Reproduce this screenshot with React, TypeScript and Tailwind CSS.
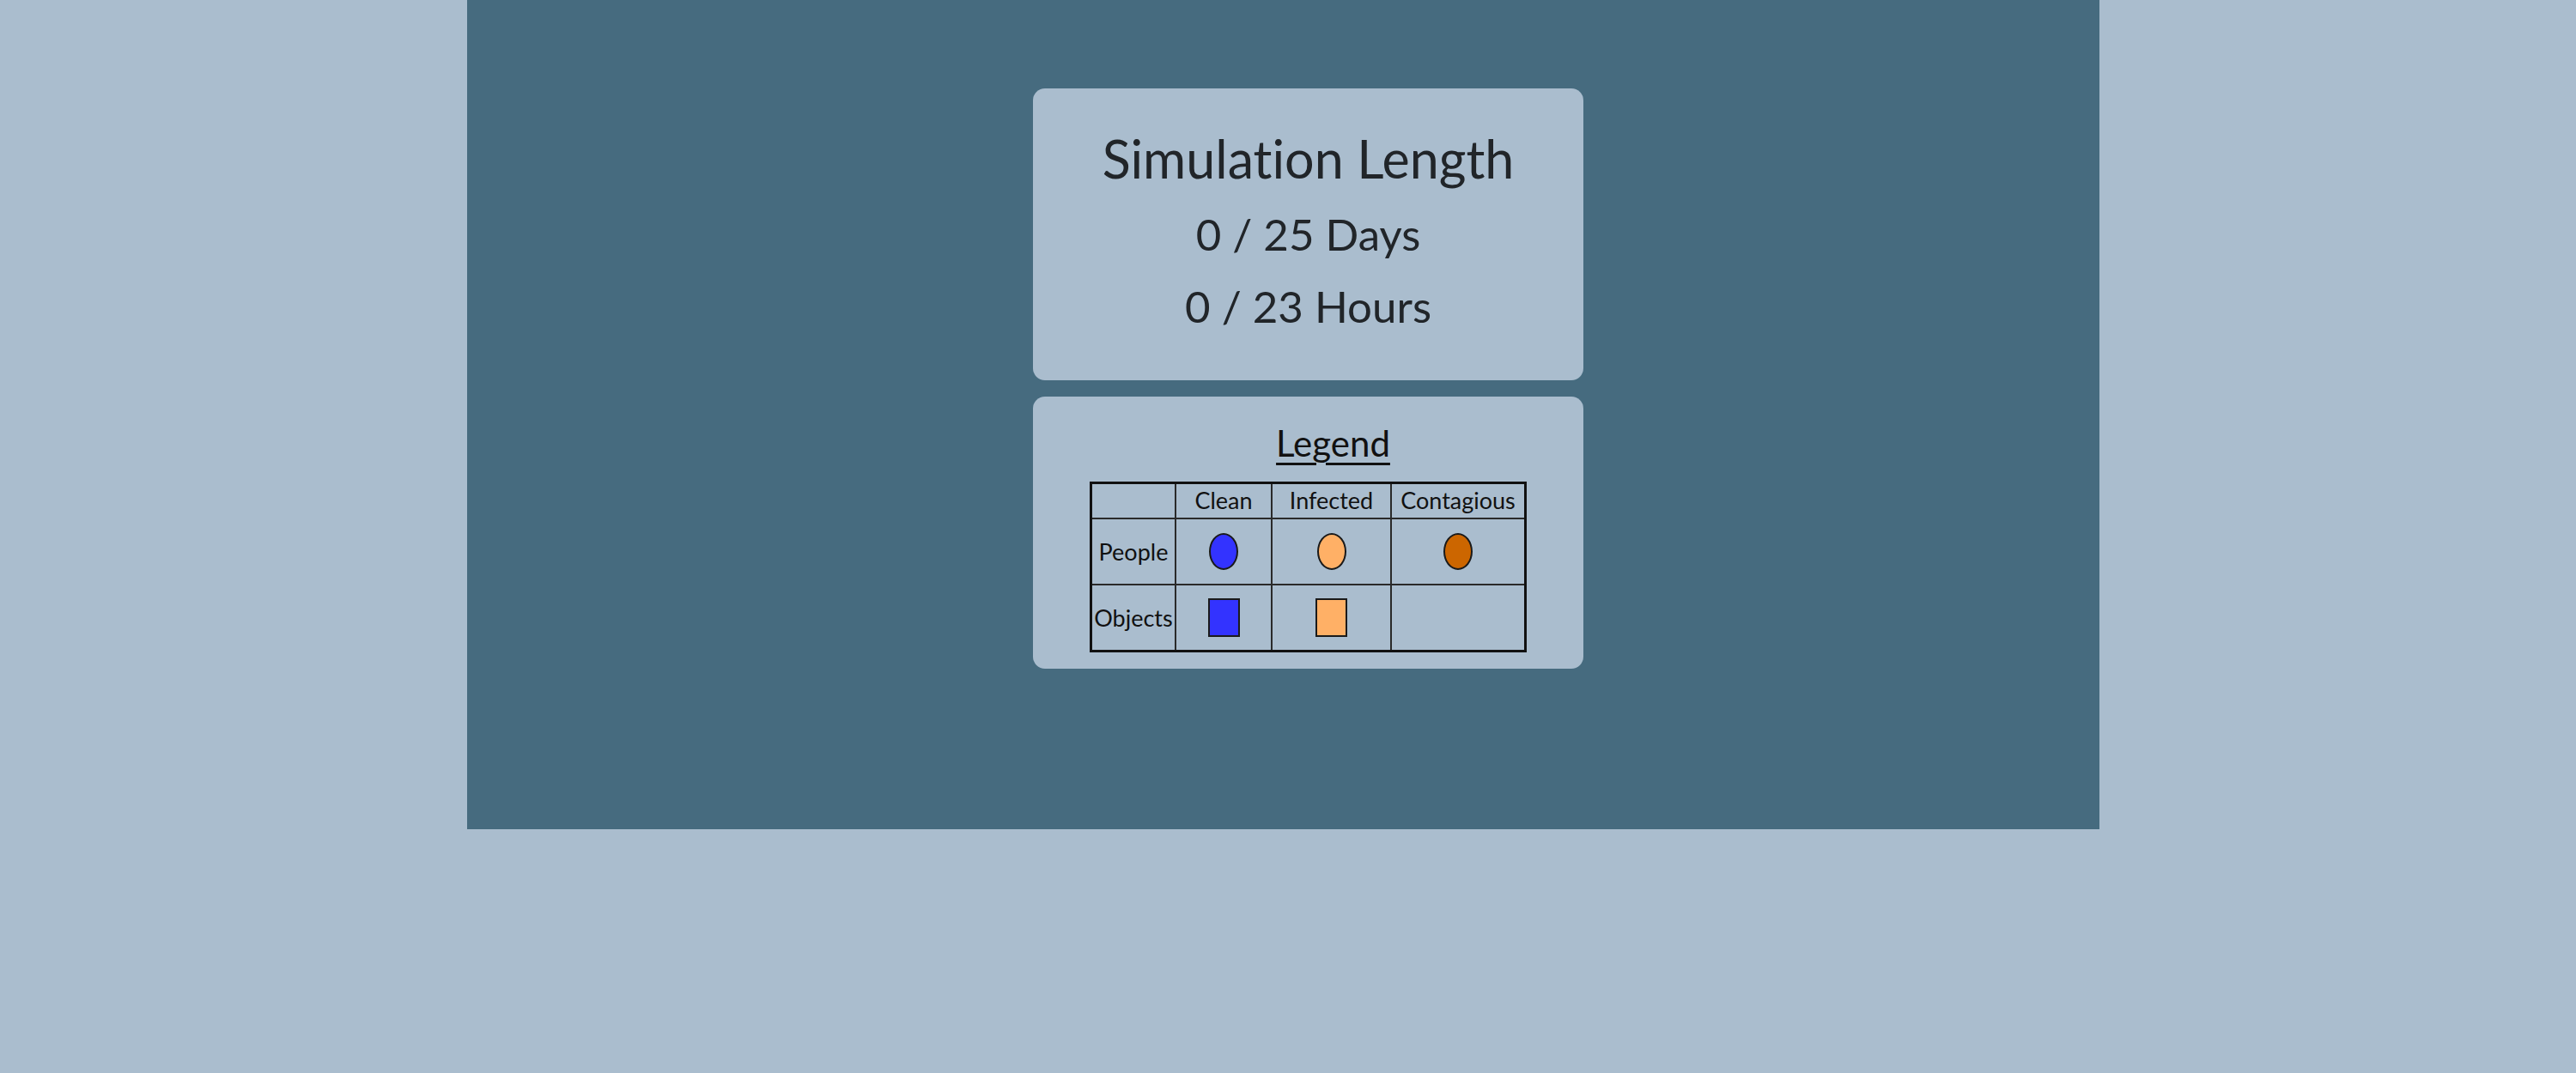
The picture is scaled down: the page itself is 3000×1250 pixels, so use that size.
import React from "react";

const font = { fontFamily: "Lato, 'Open Sans', sans-serif" };

function Cell({
  children,
  right = true,
  bottom = true,
}: {
  children?: React.ReactNode;
  right?: boolean;
  bottom?: boolean;
}) {
  return (
    <div
      className={
        "flex items-center justify-center border-[#2a2a2a] " +
        (right ? "border-r-2 " : "") +
        (bottom ? "border-b-2" : "")
      }
    >
      {children}
    </div>
  );
}

function Dot({ color }: { color: string }) {
  return (
    <div
      className="h-[43px] w-[34px] rounded-[50%] border-2 border-[#1a1a1a]"
      style={{ backgroundColor: color }}
    />
  );
}

function Box({ color }: { color: string }) {
  return (
    <div
      className="h-[45px] w-[37px] border-2 border-[#1a1a1a]"
      style={{ backgroundColor: color }}
    />
  );
}

export default function App() {
  return (
    <div className="min-h-[1250px] w-full bg-[#aabdce] [font-variant-ligatures:none]" style={font}>
      <div className="ml-[544px] flex h-[966px] w-[1901px] flex-col gap-[19px] bg-[#466b7f] pl-[659px] pt-[103px]">
        <div className="flex h-[340px] w-[641px] flex-col items-center rounded-[14px] bg-[#aabdce] pt-[40px] text-[#212529]">
          <div className="h-[88px] text-[61px] leading-[84px]">Simulation Length</div>
          <div className="h-[84px] text-[51px] leading-[84px]">0 / 25 Days</div>
          <div className="h-[84px] text-[51px] leading-[84px]">0 / 23 Hours</div>
        </div>
        <div className="flex h-[317px] w-[641px] flex-col items-center rounded-[14px] bg-[#aabdce] pt-[29px]">
          <div className="h-[50px] pl-[58px] text-[42px] leading-[50px] text-[#111] underline decoration-[3px] underline-offset-[7px]">
            Legend
          </div>
          <div className="mt-[20px] h-[199px] w-[509px] border-[3px] border-[#111] text-[27px] leading-none text-[#111]">
            <div className="grid h-full grid-cols-[98px_112px_139px_154px] grid-rows-[41px_77px_75px]">
              <Cell />
              <Cell>
                <span className="-mt-[3px]">Clean</span>
              </Cell>
              <Cell>
                <span className="-mt-[3px]">Infected</span>
              </Cell>
              <Cell right={false}>
                <span className="-mt-[3px]">Contagious</span>
              </Cell>
              <Cell>People</Cell>
              <Cell>
                <Dot color="#3333ff" />
              </Cell>
              <Cell>
                <Dot color="#ffb066" />
              </Cell>
              <Cell right={false}>
                <Dot color="#cc6600" />
              </Cell>
              <Cell bottom={false}>Objects</Cell>
              <Cell bottom={false}>
                <Box color="#3333ff" />
              </Cell>
              <Cell bottom={false}>
                <Box color="#ffb066" />
              </Cell>
              <Cell bottom={false} right={false} />
            </div>
          </div>
        </div>
      </div>
    </div>
  );
}
